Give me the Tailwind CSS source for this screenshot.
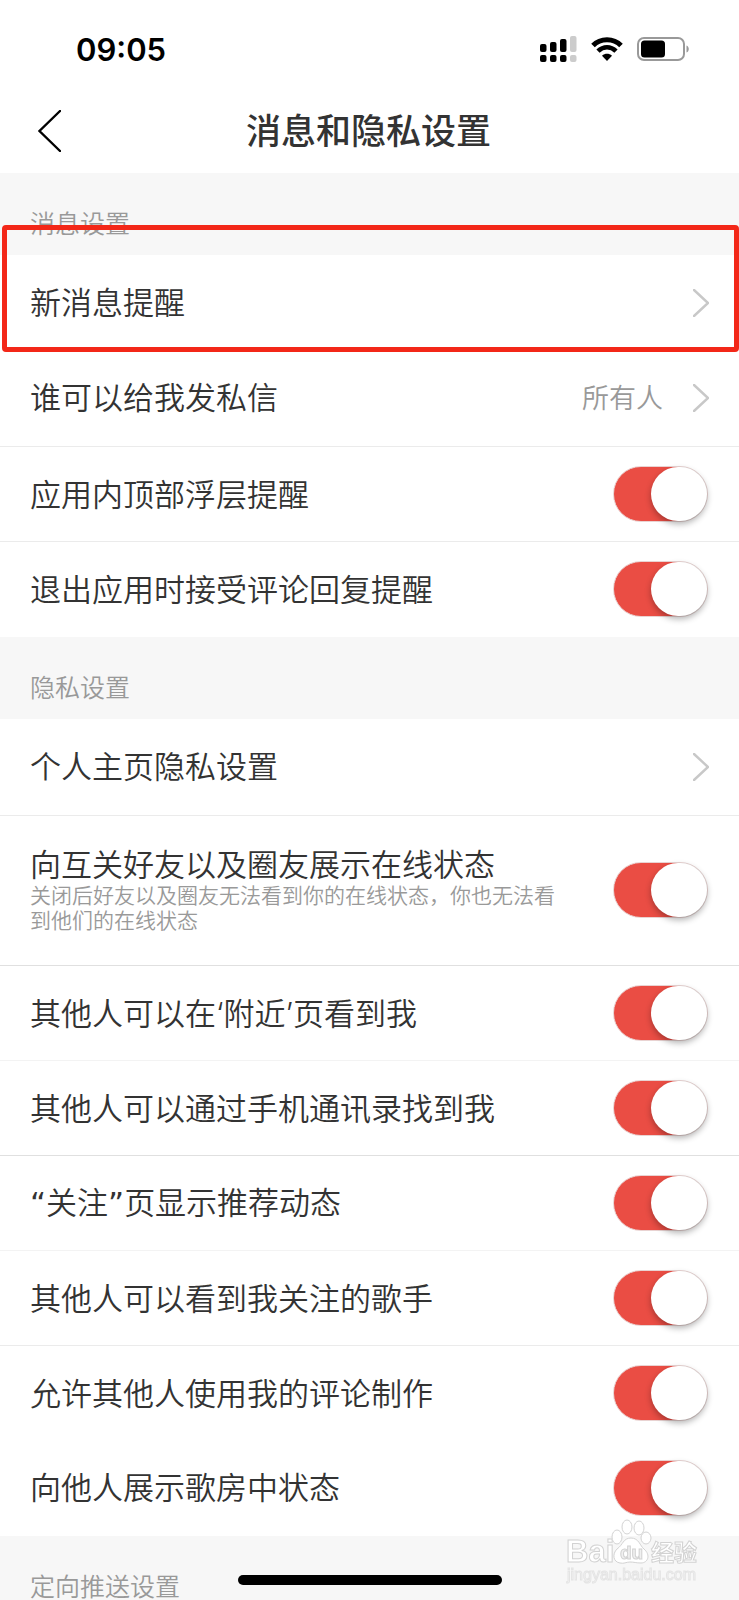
<!DOCTYPE html>
<html lang="zh-CN">
<head>
  <meta charset="UTF-8" />
  <meta name="viewport" content="width=device-width, initial-scale=1.0" />
  <title>消息和隐私设置</title>

  <!-- Tailwind CSS CDN -->
  <script src="https://cdn.jsdelivr.net/npm/@tailwindcss/browser@4"></script>
</head>
<body class="relative min-h-screen bg-[#f7f7f7] font-['Noto_Sans','Noto_Sans_CJK_SC',sans-serif] text-[#333]">
  <!-- Status Bar -->
  <div class="flex h-[88px] items-center justify-between bg-white pt-[10px] pr-[50px] pl-[76px]">
    <span class="pt-0.5 font-[Inter,sans-serif] text-[31px] leading-8 font-semibold text-black">09:05</span>
    <div class="flex items-center gap-[14px]">
      <!-- Signal -->
      <svg class="h-[26px] w-[37px]" viewBox="0 0 37 26" fill="#000">
        <rect x="0" y="8" width="6.500" height="8" rx="2" />
        <rect x="10" y="6" width="6.500" height="10" rx="2" />
        <rect x="20" y="3" width="6.500" height="13" rx="2" />
        <rect x="30" y="0" width="6.500" height="16" rx="2" fill="#ccc" />
        <rect x="0" y="19" width="6.500" height="7" rx="2" />
        <rect x="10" y="19" width="6.500" height="7" rx="2" />
        <rect x="20" y="19" width="6.500" height="7" rx="2" />
        <rect x="30" y="19" width="6.500" height="7" rx="2" fill="#ccc" />
      </svg>
      <!-- Wifi -->
      <svg class="h-6 w-8" viewBox="0 0 32 24" fill="none" stroke="#000">
        <path d="M2 8.600 C9.500 .900 22.500 .900 30 8.600" stroke-width="5" />
        <path d="M7 14.200 C12.300 9 19.700 9 25 14.200" stroke-width="4.600" />
        <path d="M16 24 L11 18.800 C14 16.200 18 16.200 21 18.800 Z" fill="#000" stroke="none" />
      </svg>
      <!-- Battery -->
      <svg class="h-6 w-[52px]" viewBox="0 0 52 24">
        <rect x="1" y="1" width="46" height="22" rx="6" fill="none" stroke="#999" stroke-width="2" />
        <rect x="4" y="3.500" width="24" height="17" rx="3.500" fill="#000" />
        <path d="M49.500 8.500 C52.500 9.500 52.500 14.500 49.500 15.500 Z" fill="#999" />
      </svg>
    </div>
  </div>

  <!-- Title Bar -->
  <header class="grid h-[85px] grid-cols-[61px_1fr_63px] items-center bg-white">
    <button type="button" aria-label="返回" class="flex justify-end">
      <svg class="h-[42px] w-6" viewBox="0 0 24 42" fill="none" stroke="#000" stroke-width="2.400" stroke-linecap="round">
        <path d="M23 1 L2.500 21 L23 41" />
      </svg>
    </button>
    <h1 class="text-center text-[35px] leading-10 font-medium">消息和隐私设置</h1>
  </header>

  <main>
    <!-- Message Settings -->
    <h2 class="px-[30px] pt-9 pb-[18px] text-[25px] leading-7 font-[350] text-[#999]">消息设置</h2>
    <div class="bg-white py-px">
      <div class="relative">
        <button type="button" class="flex h-[95px] w-full items-center justify-between px-[30px] pb-0.5 text-[31px] leading-[37px] font-[350]">
          <span>新消息提醒</span>
          <svg class="h-7 w-4" viewBox="0 0 16 28" fill="none" stroke="#c8c8c8" stroke-width="2.400" stroke-linecap="round"><path d="M1 1 L15 14 L1 27" /></svg>
        </button>
        <!-- Highlight -->
        <div class="pointer-events-none absolute -top-[31px] right-0 -bottom-px left-0.5 rounded-sm border-[5px] border-[#f32718]"></div>
      </div>
      <button type="button" class="flex h-[95px] w-full items-center px-[30px] pb-0.5 text-[31px] leading-[37px] font-[350]">
        <span>谁可以给我发私信</span>
        <span class="ml-auto text-[27px] text-[#999]">所有人</span>
        <svg class="ml-[30px] h-7 w-4" viewBox="0 0 16 28" fill="none" stroke="#c8c8c8" stroke-width="2.400" stroke-linecap="round"><path d="M1 1 L15 14 L1 27" /></svg>
      </button>
      <label class="flex h-[95px] items-center justify-between border-t border-[#ebebeb] pr-[31px] pl-[30px] text-[31px] leading-[37px] font-[350]">
        <span>应用内顶部浮层提醒</span>
        <input type="checkbox" checked class="flex h-14 w-[95px] shrink-0 appearance-none justify-end rounded-full border border-[#e9d3d2] bg-linear-to-r from-[#ea4d44] from-70% to-[#e4e4e4] to-70% before:h-[54px] before:w-[56px] before:rounded-full before:bg-white before:shadow-[0_3px_6px_rgba(0,0,0,0.3)]" />
      </label>
      <label class="flex h-[95px] items-center justify-between border-t border-[#ebebeb] pr-[31px] pl-[30px] text-[31px] leading-[37px] font-[350]">
        <span>退出应用时接受评论回复提醒</span>
        <input type="checkbox" checked class="flex h-14 w-[95px] shrink-0 appearance-none justify-end rounded-full border border-[#e9d3d2] bg-linear-to-r from-[#ea4d44] from-70% to-[#e4e4e4] to-70% before:h-[54px] before:w-[56px] before:rounded-full before:bg-white before:shadow-[0_3px_6px_rgba(0,0,0,0.3)]" />
      </label>
    </div>

    <!-- Privacy Settings -->
    <h2 class="px-[30px] pt-9 pb-[18px] text-[25px] leading-7 font-[350] text-[#999]">隐私设置</h2>
    <div class="bg-white py-px">
      <button type="button" class="flex h-[95px] w-full items-center justify-between px-[30px] pb-0.5 text-[31px] leading-[37px] font-[350]">
        <span>个人主页隐私设置</span>
        <svg class="h-7 w-4" viewBox="0 0 16 28" fill="none" stroke="#c8c8c8" stroke-width="2.400" stroke-linecap="round"><path d="M1 1 L15 14 L1 27" /></svg>
      </button>
      <label class="flex h-[150px] items-center justify-between gap-[44px] border-t border-[#ebebeb] pr-[31px] pb-0.5 pl-[30px] text-[31px] leading-[37px] font-[350]">
        <span>
          向互关好友以及圈友展示在线状态
          <span class="block text-[21px] leading-[25px] text-[#999]">关闭后好友以及圈友无法看到你的在线状态，你也无法看到他们的在线状态</span>
        </span>
        <input type="checkbox" checked class="flex h-14 w-[95px] shrink-0 appearance-none justify-end rounded-full border border-[#e9d3d2] bg-linear-to-r from-[#ea4d44] from-70% to-[#e4e4e4] to-70% before:h-[54px] before:w-[56px] before:rounded-full before:bg-white before:shadow-[0_3px_6px_rgba(0,0,0,0.3)]" />
      </label>
      <label class="flex h-[95px] items-center justify-between border-t border-[#e0e0e0] pr-[31px] pl-[30px] text-[31px] leading-[37px] font-[350]">
        <span>其他人可以在<span class="font-[Inter,sans-serif]">‘</span>附近<span class="font-[Inter,sans-serif]">’</span>页看到我</span>
        <input type="checkbox" checked class="flex h-14 w-[95px] shrink-0 appearance-none justify-end rounded-full border border-[#e9d3d2] bg-linear-to-r from-[#ea4d44] from-70% to-[#e4e4e4] to-70% before:h-[54px] before:w-[56px] before:rounded-full before:bg-white before:shadow-[0_3px_6px_rgba(0,0,0,0.3)]" />
      </label>
      <label class="flex h-[95px] items-center justify-between border-t border-[#f3f3f3] pr-[31px] pl-[30px] text-[31px] leading-[37px] font-[350]">
        <span>其他人可以通过手机通讯录找到我</span>
        <input type="checkbox" checked class="flex h-14 w-[95px] shrink-0 appearance-none justify-end rounded-full border border-[#e9d3d2] bg-linear-to-r from-[#ea4d44] from-70% to-[#e4e4e4] to-70% before:h-[54px] before:w-[56px] before:rounded-full before:bg-white before:shadow-[0_3px_6px_rgba(0,0,0,0.3)]" />
      </label>
      <label class="flex h-[95px] items-center justify-between border-t border-[#e0e0e0] pr-[31px] pl-[30px] text-[31px] leading-[37px] font-[350]">
        <span><span class="font-['DejaVu_Sans',sans-serif] font-normal">“</span>关注<span class="font-['DejaVu_Sans',sans-serif] font-normal">”</span>页显示推荐动态</span>
        <input type="checkbox" checked class="flex h-14 w-[95px] shrink-0 appearance-none justify-end rounded-full border border-[#e9d3d2] bg-linear-to-r from-[#ea4d44] from-70% to-[#e4e4e4] to-70% before:h-[54px] before:w-[56px] before:rounded-full before:bg-white before:shadow-[0_3px_6px_rgba(0,0,0,0.3)]" />
      </label>
      <label class="flex h-[95px] items-center justify-between border-t border-[#f3f3f3] pr-[31px] pl-[30px] text-[31px] leading-[37px] font-[350]">
        <span>其他人可以看到我关注的歌手</span>
        <input type="checkbox" checked class="flex h-14 w-[95px] shrink-0 appearance-none justify-end rounded-full border border-[#e9d3d2] bg-linear-to-r from-[#ea4d44] from-70% to-[#e4e4e4] to-70% before:h-[54px] before:w-[56px] before:rounded-full before:bg-white before:shadow-[0_3px_6px_rgba(0,0,0,0.3)]" />
      </label>
      <label class="flex h-[95px] items-center justify-between border-t border-[#ebebeb] pr-[31px] pl-[30px] text-[31px] leading-[37px] font-[350]">
        <span>允许其他人使用我的评论制作</span>
        <input type="checkbox" checked class="flex h-14 w-[95px] shrink-0 appearance-none justify-end rounded-full border border-[#e9d3d2] bg-linear-to-r from-[#ea4d44] from-70% to-[#e4e4e4] to-70% before:h-[54px] before:w-[56px] before:rounded-full before:bg-white before:shadow-[0_3px_6px_rgba(0,0,0,0.3)]" />
      </label>
      <label class="flex h-[95px] items-center justify-between pr-[31px] pl-[30px] text-[31px] leading-[37px] font-[350]">
        <span>向他人展示歌房中状态</span>
        <input type="checkbox" checked class="flex h-14 w-[95px] shrink-0 appearance-none justify-end rounded-full border border-[#e9d3d2] bg-linear-to-r from-[#ea4d44] from-70% to-[#e4e4e4] to-70% before:h-[54px] before:w-[56px] before:rounded-full before:bg-white before:shadow-[0_3px_6px_rgba(0,0,0,0.3)]" />
      </label>
    </div>

    <!-- Push Settings -->
    <h2 class="px-[30px] pt-9 text-[25px] leading-7 font-[350] text-[#999]">定向推送设置</h2>
  </main>

  <!-- Home Indicator -->
  <div class="fixed bottom-[15px] left-1/2 h-[10px] w-[264px] -translate-x-1/2 rounded-full bg-black"></div>

  <!-- Watermark -->
  <svg class="pointer-events-none fixed right-[35px] bottom-3 h-[70px] w-[140px]" viewBox="0 0 140 70" fill="#fff" stroke="#d2d2d2" stroke-width="1">
    <text x="2" y="44" class="font-['Liberation_Sans',sans-serif] text-[31px] font-bold">Bai</text>
    <ellipse cx="53" cy="19" rx="5" ry="7" />
    <ellipse cx="63" cy="9" rx="5" ry="7" />
    <ellipse cx="75" cy="10" rx="5" ry="7" />
    <ellipse cx="82" cy="20" rx="5" ry="6" />
    <path d="M67 20 C75 20 76 28 80 31 C87 37 84 45 77 45 C72 45 70 44 66 44 C62 44 60 46 56 45 C49 44 48 36 53 31 C59 27 59 20 67 20 Z" />
    <text x="56" y="41" fill="#f0f0f0" class="font-['Liberation_Sans',sans-serif] text-[19px] font-bold">du</text>
    <text x="87" y="43" class="font-['Noto_Sans_CJK_SC',sans-serif] text-[23px] font-bold">经验</text>
    <text x="3" y="62" fill="#f7f7f7" stroke="#e4e4e4" class="font-['Liberation_Sans',sans-serif] text-[16px]">jingyan.baidu.com</text>
  </svg>
</body>
</html>
